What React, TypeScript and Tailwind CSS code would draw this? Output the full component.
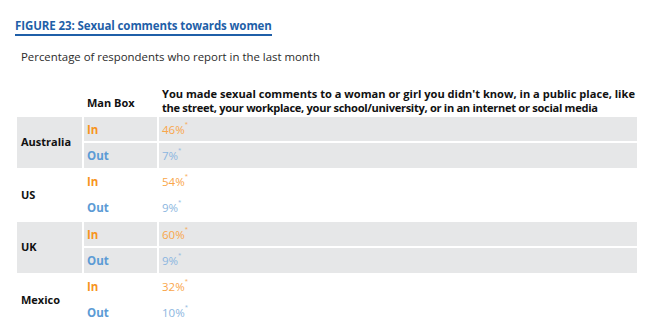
import React from "react";

const rows = [
  { country: "Australia", inV: "46%", outV: "7%", shaded: true },
  { country: "US", inV: "54%", outV: "9%", shaded: false },
  { country: "UK", inV: "60%", outV: "9%", shaded: true },
  { country: "Mexico", inV: "32%", outV: "10%", shaded: false },
];

export default function App() {
  return (
    <div
      className="w-[650px] h-[327px] overflow-hidden bg-white"
      style={{ fontFamily: '"Open Sans", "Liberation Sans", sans-serif' }}
    >
      <div className="pl-[15px] pt-[12px]">
        <div className="inline-block border-b-2 border-[#1f5fa8] pb-[1px] text-[11.5px] font-bold leading-[15px] text-[#1f5fa8] tracking-[-0.1px]">
          FIGURE 23: Sexual comments towards women
        </div>
      </div>
      <div className="pl-[21px] pt-[13px] text-[11.4px] leading-[16px] text-[#2b2b2b]">
        Percentage of respondents who report in the last month
      </div>
      <table className="table-fixed ml-[15px] mt-[20px] w-[624px] border-separate border-spacing-[2px] text-[11.5px]">
        <colgroup>
          <col className="w-[65px]" />
          <col className="w-[73px]" />
          <col className="w-[478px]" />
        </colgroup>
        <thead>
          <tr>
            <th className="p-0"></th>
            <th className="pl-[3px] pt-[4px] text-left align-middle font-bold text-[#111] text-[11px]">Man Box</th>
            <th className="pl-[3px] text-left font-bold leading-[14px] text-[#111] text-[11.1px] whitespace-nowrap">
              <div>You made sexual comments to a woman or girl you didn't know, in a public place, like</div>
              <div className="tracking-[-0.3px]">the street, your workplace, your school/university, or in an internet or social media</div>
            </th>
          </tr>
        </thead>
        <tbody>
          {rows.map((r) => {
            const bg = r.shaded ? "bg-[#e6e7e8]" : "bg-white";
            return (
              <React.Fragment key={r.country}>
                <tr className="h-[24.25px]">
                  <td rowSpan={2} className={`${bg} pl-[4px] font-bold text-[#111] text-[11px]`}>
                    {r.country}
                  </td>
                  <td className={`${bg} pl-[3px] font-bold text-[#f7941d]`}>In</td>
                  <td className={`${bg} pl-[3px] text-[#f9a64a]`}>
                    {r.inV}
                    <sup className="text-[6px] align-super">*</sup>
                  </td>
                </tr>
                <tr className="h-[24.25px]">
                  <td className={`${bg} pl-[3px] font-bold text-[#5b9bd5]`}>Out</td>
                  <td className={`${bg} pl-[3px] text-[#8cb6e0]`}>
                    {r.outV}
                    <sup className="text-[6px] align-super">*</sup>
                  </td>
                </tr>
              </React.Fragment>
            );
          })}
        </tbody>
      </table>
    </div>
  );
}
